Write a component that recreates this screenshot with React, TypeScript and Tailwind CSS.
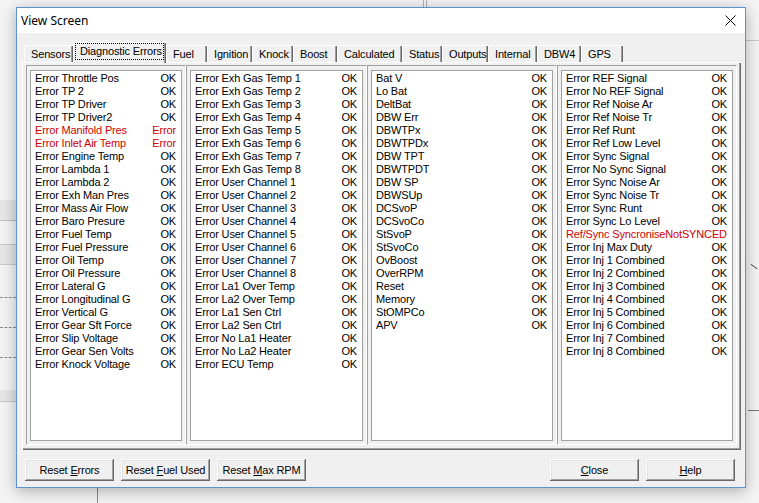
import React from "react";

type Row = { label: string; value?: string; red?: boolean };

const ok = (label: string): Row => ({ label, value: "OK" });

const col1: Row[] = [
  ok("Error Throttle Pos"),
  ok("Error TP 2"),
  ok("Error TP Driver"),
  ok("Error TP Driver2"),
  { label: "Error Manifold Pres", value: "Error", red: true },
  { label: "Error Inlet Air Temp", value: "Error", red: true },
  ok("Error Engine Temp"),
  ok("Error Lambda 1"),
  ok("Error Lambda 2"),
  ok("Error Exh Man Pres"),
  ok("Error Mass Air Flow"),
  ok("Error Baro Presure"),
  ok("Error Fuel Temp"),
  ok("Error Fuel Pressure"),
  ok("Error Oil Temp"),
  ok("Error Oil Pressure"),
  ok("Error Lateral G"),
  ok("Error Longitudinal G"),
  ok("Error Vertical G"),
  ok("Error Gear Sft Force"),
  ok("Error Slip Voltage"),
  ok("Error Gear Sen Volts"),
  ok("Error Knock Voltage"),
];

const col2: Row[] = [
  ...[1, 2, 3, 4, 5, 6, 7, 8].map((n) => ok(`Error Exh Gas Temp ${n}`)),
  ...[1, 2, 3, 4, 5, 6, 7, 8].map((n) => ok(`Error User Channel ${n}`)),
  ok("Error La1 Over Temp"),
  ok("Error La2 Over Temp"),
  ok("Error La1 Sen Ctrl"),
  ok("Error La2 Sen Ctrl"),
  ok("Error No La1 Heater"),
  ok("Error No La2 Heater"),
  ok("Error ECU Temp"),
];

const col3: Row[] = [
  "Bat V",
  "Lo Bat",
  "DeltBat",
  "DBW Err",
  "DBWTPx",
  "DBWTPDx",
  "DBW TPT",
  "DBWTPDT",
  "DBW SP",
  "DBWSUp",
  "DCSvoP",
  "DCSvoCo",
  "StSvoP",
  "StSvoCo",
  "OvBoost",
  "OverRPM",
  "Reset",
  "Memory",
  "StOMPCo",
  "APV",
].map(ok);

const col4: Row[] = [
  ok("Error REF Signal"),
  ok("Error No REF Signal"),
  ok("Error Ref Noise Ar"),
  ok("Error Ref Noise Tr"),
  ok("Error Ref Runt"),
  ok("Error Ref Low Level"),
  ok("Error Sync Signal"),
  ok("Error No Sync Signal"),
  ok("Error Sync Noise Ar"),
  ok("Error Sync Noise Tr"),
  ok("Error Sync Runt"),
  ok("Error Sync Lo Level"),
  { label: "Ref/Sync SyncroniseNotSYNCED", red: true },
  ok("Error Inj Max Duty"),
  ...[1, 2, 3, 4, 5, 6, 7, 8].map((n) => ok(`Error Inj ${n} Combined`)),
];

function ListCol({ rows, className }: { rows: Row[]; className: string }) {
  return (
    <div
      className={`${className} h-[380px] border border-t-[#a0a0a0] border-l-[#a0a0a0] border-r-white border-b-white pt-[4px] px-[3px] pb-[3px]`}
    >
      <div className="h-full bg-white border border-[#a0a0a0] pt-[1px] pl-[4px] pr-[5px]">
        {rows.map((r, i) => (
          <div
            key={i}
            className={`flex justify-between h-[13px] leading-[13px] whitespace-nowrap ${
              r.red ? "text-[#d00000]" : "text-black"
            }`}
          >
            <span>{r.label}</span>
            {r.value && <span>{r.value}</span>}
          </div>
        ))}
      </div>
    </div>
  );
}

const tabs: { label: string; w: string }[] = [
  { label: "Sensors", w: "w-[49px]" },
  { label: "Diagnostic Errors", w: "w-[93px]" },
  { label: "Fuel", w: "w-[41px]" },
  { label: "Ignition", w: "w-[45px]" },
  { label: "Knock", w: "w-[41px]" },
  { label: "Boost", w: "w-[44px]" },
  { label: "Calculated", w: "w-[65px]" },
  { label: "Status", w: "w-[40px]" },
  { label: "Outputs", w: "w-[46px]" },
  { label: "Internal", w: "w-[49px]" },
  { label: "DBW4", w: "w-[44px]" },
  { label: "GPS", w: "w-[42px]" },
];

function Button({ children, className = "" }: { children: React.ReactNode; className?: string }) {
  return (
    <div
      className={`w-[89px] h-[22px] flex items-center justify-center bg-[#f0f0f0] shadow-[inset_-1px_-1px_0_#696969,inset_1px_1px_0_#ffffff,inset_-2px_-2px_0_#a0a0a0,inset_2px_2px_0_#e3e3e3] ${className}`}
    >
      <span className="whitespace-nowrap">{children}</span>
    </div>
  );
}

export default function App() {
  return (
    <div className="relative w-[759px] h-[503px] overflow-hidden bg-[#f4f4f4] font-['Liberation_Sans',Arial,sans-serif] text-[11px] tracking-[-0.15px] text-black">
      {/* background application behind the dialog */}
      <div className="absolute left-[423px] top-0 w-[4px] h-[8px] border-l border-r border-[#b0b0b0]" />
      <div className="absolute left-0 top-[200px] w-[16px] h-[21px] bg-[#e6e6e6] border-b border-[#c0c0c0]" />
      <div className="absolute left-0 top-[244px] w-[16px] h-[21px] bg-[#e6e6e6] border-t border-b border-[#c8c8c8]" />
      <div className="absolute left-0 top-[297px] w-[16px] border-t border-dashed border-[#8a8a8a]" />
      <div className="absolute left-0 top-[327px] w-[16px] border-t border-dashed border-[#8a8a8a]" />
      <div className="absolute left-0 top-[357px] w-[16px] border-t border-dashed border-[#8a8a8a]" />
      <div className="absolute left-0 top-[390px] w-[16px] h-[12px] bg-[#e6e6e6] border-b border-[#c8c8c8]" />
      <div className="absolute left-[97px] top-[488px] h-[15px] border-l border-[#8a8a8a]" />
      <div className="absolute left-[746px] top-[40px] w-[13px] border-t border-[#c8c8c8]" />
      <div className="absolute left-[750px] top-[266px] w-[8px] border-t border-[#555] rotate-[35deg]" />
      <div className="absolute left-[748px] top-[410px] w-[11px] border-t border-[#777]" />

      {/* dialog window */}
      <div className="absolute left-[16px] top-[7px] w-[730px] h-[481px] border border-[#5b92cf] bg-[#f0f0f0] flex flex-col shadow-[0_3px_14px_rgba(0,0,0,0.3)]">
        <div className="h-[25px] bg-white flex items-center justify-between pl-[4px] pr-[9px]">
          <span className="font-['Noto_Sans',sans-serif] text-[12px] tracking-normal text-black">View Screen</span>
          <svg width="11" height="11" viewBox="0 0 11 11">
            <path d="M0.5 0.5 L10.5 10.5 M10.5 0.5 L0.5 10.5" stroke="#000" strokeWidth="1" fill="none" />
          </svg>
        </div>

        <div className="flex-1 flex flex-col pl-[5px] pr-[4px] pt-[9px]">
          {/* tabs */}
          <div className="relative z-10 flex items-end h-[20px] pl-[2px]">
            {tabs.map((t) =>
              t.label === "Diagnostic Errors" ? (
                <div
                  key={t.label}
                  className={`${t.w} h-[21px] mb-[-1px] bg-[#f0f0f0] border-t border-l border-white shadow-[inset_-1px_0_0_#696969,inset_-2px_0_0_#a0a0a0] pl-[1px]`}
                >
                  <div className="w-[89px] h-[17px] border border-dotted border-black pl-[4px] leading-[15px] whitespace-nowrap">
                    {t.label}
                  </div>
                </div>
              ) : (
                <div
                  key={t.label}
                  className={`${t.w} h-[17px] flex items-center pl-[6px] border-t border-l border-white shadow-[inset_-1px_0_0_#696969,inset_-2px_0_0_#a0a0a0] whitespace-nowrap`}
                >
                  {t.label}
                </div>
              )
            )}
          </div>

          {/* panel */}
          <div className="h-[388px] bg-[#f0f0f0] shadow-[inset_1px_1px_0_#ffffff,inset_-1px_-1px_0_#696969,inset_-2px_-2px_0_#a0a0a0] pl-[4px] pt-[3px] flex">
            <ListCol rows={col1} className="w-[160px]" />
            <ListCol rows={col2} className="w-[181px]" />
            <ListCol rows={col3} className="w-[190px]" />
            <ListCol rows={col4} className="w-[180px]" />
          </div>

          {/* buttons */}
          <div className="flex mt-[9px] pl-[3px] pr-[6px] gap-[7px]">
            <Button>
              Reset <span className="underline">E</span>rrors
            </Button>
            <Button>
              Reset <span className="underline">F</span>uel Used
            </Button>
            <Button>
              Reset <span className="underline">M</span>ax RPM
            </Button>
            <div className="flex-1" />
            <Button>
              <span className="underline">C</span>lose
            </Button>
            <Button>
              <span className="underline">H</span>elp
            </Button>
          </div>
        </div>
      </div>
    </div>
  );
}
